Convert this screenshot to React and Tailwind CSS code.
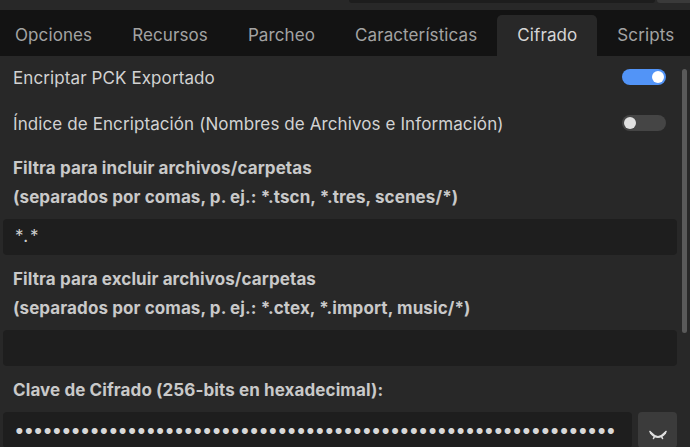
import { useState } from "react";

function Toggle({ on }) {
    return (
        <div className={"w-[44px] h-[16px] rounded-full flex items-center px-[2px] " + (on ? "bg-[#5294f7] justify-end" : "bg-[#454545] justify-start")}>
            <div className={"w-[12px] h-[12px] rounded-full " + (on ? "bg-white" : "bg-[#e0e0e0]")}></div>
        </div>
    )
}

function EyeClosed() {
    return (
        <svg width="20" height="12" viewBox="0 0 20 12" fill="none">
            <path d="M3 3 Q10 11 17 3" stroke="#e0e0e0" strokeWidth="2.2" strokeLinecap="round" />
            <path d="M3 3 L2 1.5 M17 3 L18 1.5 M6.5 6.5 L5.5 8.5 M13.5 6.5 L14.5 8.5" stroke="#e0e0e0" strokeWidth="1.6" strokeLinecap="round" />
        </svg>
    )
}

export default function App(){
    const tabs = ["Opciones", "Recursos", "Parcheo", "Características", "Cifrado", "Scripts"]
    const [active] = useState("Cifrado")
    const secret = Array.from({ length: 64 })

    return(
        <div className="w-[690px] h-[447px] overflow-hidden bg-[#282828] font-['Inter','Noto_Sans',sans-serif] text-[17px] tracking-[0.1px]">
            {/* strip of the dialog above the tabs */}
            <div className="h-[10px] flex">
                <div className="w-[349px]"></div>
                <div className="w-[306px] h-[3px] bg-[#1d1d1d] rounded-b-[4px]"></div>
                <div className="flex-1 ml-[2px] h-[3px] bg-[#3a3a3a] rounded-bl-[4px]"></div>
            </div>

            <div className="h-[46px] bg-[#131313] flex items-end -ml-[5px]">
                {tabs.map((t) => (
                    <div key={t} className={"h-[41px] px-[20px] pt-[1px] flex items-center rounded-t-[5px] " + (t === active ? "bg-[#282828] text-[#d6d6d6]" : "text-[#a3a3a3]")}>
                        {t}
                    </div>
                ))}
            </div>

            <div className="flex">
                <div className="w-[674px] ml-[3px] flex flex-col text-[#d2d2d2]">
                    <div className="h-[42px] flex items-center justify-between pl-[10px] pr-[11px]">
                        <span className="pt-[3px]">Encriptar PCK Exportado</span>
                        <Toggle on />
                    </div>
                    <div className="h-[42px] mt-[4px] flex items-center justify-between pl-[10px] pr-[11px]">
                        <span className="pt-[3px]">Índice de Encriptación (Nombres de Archivos e Información)</span>
                        <Toggle />
                    </div>

                    <div className="mt-[10px] pl-[10px] font-bold text-[#c9c9c9] leading-[29px]">
                        <div>Filtra para incluir archivos/carpetas</div>
                        <div>(separados por comas, p. ej.: *.tscn, *.tres, scenes/*)</div>
                    </div>
                    <div className="mt-[7px] h-[36px] bg-[#1e1e1e] rounded-[4px] flex items-center px-[12px] text-[#cfcfcf] tracking-[2px]">*.*</div>

                    <div className="mt-[10px] pl-[10px] font-bold text-[#c9c9c9] leading-[29px]">
                        <div>Filtra para excluir archivos/carpetas</div>
                        <div>(separados por comas, p. ej.: *.ctex, *.import, music/*)</div>
                    </div>
                    <div className="mt-[7px] h-[36px] bg-[#1e1e1e] rounded-[4px]"></div>

                    <div className="mt-[10px] pl-[10px] font-bold text-[#c9c9c9] leading-[29px]">
                        Clave de Cifrado (256-bits en hexadecimal):
                    </div>
                    <div className="mt-[7px] flex gap-[6px]">
                        <div className="w-[629px] h-[36px] bg-[#1e1e1e] rounded-[4px] flex items-center pl-[11px] text-[#d8d8d8] text-[19px] leading-none overflow-hidden whitespace-nowrap">
                            {secret.map((_, i) => (
                                <span key={i} className="inline-block w-[9.4px] text-center">•</span>
                            ))}
                        </div>
                        <div className="flex-1 h-[36px] bg-[#3b3b3b] rounded-[4px] flex items-end justify-center pb-[6px]">
                            <EyeClosed />
                        </div>
                    </div>
                </div>
                <div className="ml-[5px] pt-[13px]">
                    <div className="w-[5px] h-[264px] bg-[#5a5a5a] rounded-full"></div>
                </div>
            </div>
        </div>
    )
}
